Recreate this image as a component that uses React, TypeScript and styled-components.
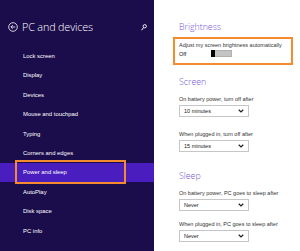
import React from "react";
import styled, { createGlobalStyle } from "styled-components";

const GlobalStyle = createGlobalStyle`
  html, body {
    margin: 0;
    padding: 0;
    background: #ffffff;
  }
  body {
    font-family: "Liberation Sans", Arial, sans-serif;
  }
`;

const navItems = [
  "Lock screen",
  "Display",
  "Devices",
  "Mouse and touchpad",
  "Typing",
  "Corners and edges",
  "Power and sleep",
  "AutoPlay",
  "Disk space",
  "PC info"
];

const ACTIVE = "Power and sleep";

const BackIcon = () => (
  <svg width="10" height="10" viewBox="0 0 20 20">
    <circle cx="10" cy="10" r="8.6" fill="none" stroke="#ffffff" strokeWidth="1.6" />
    <path d="M14.5 10H6M9.5 6.2L5.7 10l3.8 3.8" fill="none" stroke="#ffffff" strokeWidth="1.6" />
  </svg>
);

const SearchIcon = () => (
  <svg width="6" height="7" viewBox="0 0 12 14">
    <circle cx="7.5" cy="4.5" r="3.3" fill="none" stroke="#ffffff" strokeWidth="1.8" />
    <path d="M5.2 7L1.2 12.5" stroke="#ffffff" strokeWidth="2" />
  </svg>
);

const Chevron = () => (
  <svg width="6" height="4" viewBox="0 0 12 8">
    <path d="M1.5 1.5l4.5 4.5 4.5-4.5" fill="none" stroke="#222222" strokeWidth="2.4" />
  </svg>
);

const App = () => {
  return (
    <>
      <GlobalStyle />
      <Screen>
        <Sidebar>
          <Header>
            <BackIcon />
            <Title>PC and devices</Title>
            <SearchSlot>
              <SearchIcon />
            </SearchSlot>
          </Header>
          <Nav>
            {navItems.map((item) => (
              <NavItem key={item} $active={item === ACTIVE}>
                {item}
                {item === ACTIVE && <Marker />}
              </NavItem>
            ))}
          </Nav>
        </Sidebar>

        <Content>
          <Heading>Brightness</Heading>
          <Callout>
            <Label>Adjust my screen brightness automatically</Label>
            <ToggleRow>
              <span>Off</span>
              <Toggle>
                <Thumb />
              </Toggle>
            </ToggleRow>
          </Callout>

          <Heading $top={10}>Screen</Heading>
          <Label $top={6}>On battery power, turn off after</Label>
          <Select>
            10 minutes
            <Chevron />
          </Select>
          <Label $top={13}>When plugged in, turn off after</Label>
          <Select>
            15 minutes
            <Chevron />
          </Select>

          <Heading $top={17}>Sleep</Heading>
          <Label $top={6}>On battery power, PC goes to sleep after</Label>
          <Select>
            Never
            <Chevron />
          </Select>
          <Label $top={9}>When plugged in, PC goes to sleep after</Label>
          <Select>
            Never
            <Chevron />
          </Select>
        </Content>
      </Screen>
    </>
  );
};

const Screen = styled.div`
  display: flex;
  width: 300px;
  height: 251px;
  overflow: hidden;
`;

const Sidebar = styled.div`
  width: 154px;
  flex-shrink: 0;
  background: #1b0c4c;
  color: #ffffff;
`;

const Header = styled.div`
  display: flex;
  align-items: center;
  height: 46.3px;
  padding: 8px 0 0 8px;
  box-sizing: border-box;
  gap: 4px;
`;

const Title = styled.div`
  font-family: "Open Sans", "Liberation Sans", sans-serif;
  font-weight: 300;
  font-size: 10.8px;
  letter-spacing: -0.15px;
  line-height: 14px;
  flex: 1;
`;

const SearchSlot = styled.div`
  display: flex;
  align-items: center;
  padding-right: 7px;
`;

const Nav = styled.div`
  display: flex;
  flex-direction: column;
`;

const NavItem = styled.div<{ $active?: boolean }>`
  position: relative;
  display: flex;
  align-items: center;
  height: 19.4px;
  padding-left: 23px;
  font-size: 5.9px;
  color: #ffffff;
  background: ${(p) => (p.$active ? "#4a1dbf" : "transparent")};
`;

const Marker = styled.span`
  position: absolute;
  left: 15px;
  top: -3px;
  width: 111px;
  height: 24px;
  box-sizing: border-box;
  border: 2px solid #f58a2e;
`;

const Content = styled.div`
  flex: 1;
  padding: 20px 0 0 25px;
  color: #333333;
`;

const Heading = styled.div<{ $top?: number }>`
  margin-top: ${(p) => p.$top ?? 0}px;
  font-family: "Open Sans", "Liberation Sans", sans-serif;
  font-weight: 300;
  font-size: 8.8px;
  line-height: 14px;
  color: #7557d6;
`;

const Callout = styled.div`
  margin: 3px 7px 0 -6px;
  padding: 2px 0 5px 4px;
  border: 2px solid #f58a2e;
`;

const Label = styled.div<{ $top?: number }>`
  margin-top: ${(p) => p.$top ?? 0}px;
  font-size: 5.5px;
  line-height: 8px;
  color: #333333;
  white-space: nowrap;
`;

const ToggleRow = styled.div`
  display: flex;
  align-items: center;
  height: 9px;
  font-size: 5.5px;
  color: #111111;

  span {
    width: 32px;
  }
`;

const Toggle = styled.div`
  display: flex;
  width: 21px;
  height: 7px;
  background: #c4c4c4;
  box-sizing: border-box;
  border: 1px solid #b0b0b0;
  border-left: none;
`;

const Thumb = styled.div`
  width: 4px;
  height: 7px;
  margin-top: -1px;
  background: #000000;
`;

const Select = styled.div`
  display: flex;
  align-items: center;
  justify-content: space-between;
  margin-top: 2px;
  width: 70px;
  height: 12px;
  box-sizing: border-box;
  padding: 0 4px 0 4px;
  border: 1px solid #c6c6c6;
  font-size: 5.5px;
  color: #222222;
  background: #ffffff;
`;

export default App;
